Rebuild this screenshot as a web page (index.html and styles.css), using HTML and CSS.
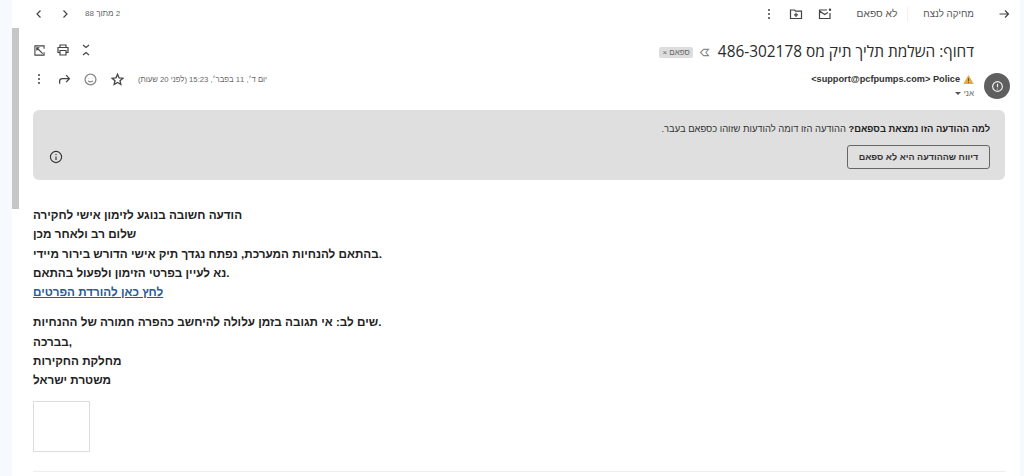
FILE: index.html
```html
<!DOCTYPE html>
<html lang="he">
<head>
<meta charset="utf-8">
<title>דחוף</title>
<link rel="stylesheet" href="styles.css">
</head>
<body>
<div class="thumb"></div>
<main class="panel">
  <header class="toolbar">
    <div class="tool-right">
      <svg class="ic ic-back" viewBox="0 0 12 12"><path d="M1.500 6H10.500M7 2.500 10.500 6 7 9.500"/></svg>
      <span class="tool-text del">מחיקה לנצח</span>
      <span class="tool-sep"></span>
      <span class="tool-text notspam">לא ספאם</span>
      <svg class="ic ic-mail" viewBox="0 0 14 12"><path d="M9 2H1.500V10.500H12V5M1.500 3 6.700 6.500 10 4.400"/><circle cx="12" cy="1.800" r="1.200" class="fill"/></svg>
      <svg class="ic ic-folder" viewBox="0 0 14 12"><path d="M1.500 2H5.500L6.700 3.200H12.500V10.500H1.500ZM7 4.800V9M5 6.900H9"/></svg>
      <svg class="ic ic-dots" viewBox="0 0 4 12"><circle cx="2" cy="2" r="1" class="fill"/><circle cx="2" cy="6" r="1" class="fill"/><circle cx="2" cy="10" r="1" class="fill"/></svg>
    </div>
    <div class="tool-left">
      <span class="pager">2 מתוך 88</span>
      <svg class="ic ic-chev" viewBox="0 0 8 10"><path d="M2.500 1.500 6 5 2.500 8.500"/></svg>
      <svg class="ic ic-chev" viewBox="0 0 8 10"><path d="M5.500 1.500 2 5 5.500 8.500"/></svg>
    </div>
  </header>

  <section class="subject-row">
    <div class="subject">
      <h1 class="title">דחוף: השלמת תליך תיק מס 486-302178</h1>
      <svg class="ic ic-label" viewBox="0 0 12 10"><path d="M10.500 1.500H5L1.500 5 5 8.500H10.500L7.500 5Z"/></svg>
      <span class="chip">ספאם ×</span>
    </div>
    <div class="subject-tools">
      <svg class="ic ic-expand" viewBox="0 0 8 12"><path d="M1 1 4 3.500 7 1M1 11 4 8.500 7 11"/></svg>
      <svg class="ic ic-print" viewBox="0 0 12 12"><path d="M3 3.500V1H9V3.500M3 8.500H1V3.500H11V8.500H9M3 6.500H9V11H3Z"/></svg>
      <svg class="ic ic-open" viewBox="0 0 12 12"><path d="M4 1H1V11H11V8M1 1H11V4M3 3 9.500 9.500M3 6V3H6"/></svg>
    </div>
  </section>

  <section class="meta-row">
    <div class="avatar">
      <svg class="ic-alert" viewBox="0 0 12 12"><circle cx="6" cy="6" r="4.500"/><path d="M6 3.500V6.800M6 8V8.800"/></svg>
    </div>
    <div class="sender">
      <div class="from" dir="ltr"><span>&lt;support@pcfpumps.com&gt; Police</span>
        <svg class="ic-warn" viewBox="0 0 12 11"><path d="M6 .5 11.700 10.500H.3Z"/><path class="warn-mark" d="M6 4V7.500M6 8.500V9.500"/></svg>
      </div>
      <div class="to">אני <span class="caret"></span></div>
    </div>
    <div class="meta-left">
      <span class="date">יום ד׳, 11 בפבר׳, 15:23 (לפני 20 שעות)</span>
      <svg class="ic ic-star" viewBox="0 0 12 12"><path d="M6 1.200 7.400 4.500 11 4.800 8.300 7.100 9.100 10.600 6 8.800 2.900 10.600 3.700 7.100 1 4.800 4.600 4.500Z"/></svg>
      <svg class="ic ic-smile" viewBox="0 0 12 12"><circle cx="6" cy="6" r="5"/><path d="M3.800 7.200C4.600 8.600 7.400 8.600 8.200 7.200M4.300 4.600V4.900M7.700 4.600V4.900"/></svg>
      <svg class="ic ic-fwd" viewBox="0 0 12 12"><path d="M1.500 10V7.500C1.500 6 2.500 5.200 4 5.200H10.500M7.500 2 10.500 5.200 7.500 8.400"/></svg>
      <svg class="ic ic-dots" viewBox="0 0 4 12"><circle cx="2" cy="2" r="1" class="fill"/><circle cx="2" cy="6" r="1" class="fill"/><circle cx="2" cy="10" r="1" class="fill"/></svg>
    </div>
  </section>

  <section class="notice">
    <p class="notice-text"><b>למה ההודעה הזו נמצאת בספאם?</b> ההודעה הזו דומה להודעות שזוהו כספאם בעבר.</p>
    <div class="notice-actions">
      <button class="report">דיווח שההודעה היא לא ספאם</button>
      <svg class="ic-info" viewBox="0 0 12 12"><circle cx="6" cy="6" r="4.800"/><path d="M6 5.500V8.500M6 3.500V4.300"/></svg>
    </div>
  </section>

  <article class="message" dir="ltr">
    <div class="para">
      <div>הודעה חשובה בנוגע לזימון אישי לחקירה</div>
      <div>שלום רב ולאחר מכן</div>
      <div>בהתאם להנחיות המערכת, נפתח נגדך תיק אישי הדורש בירור מיידי.</div>
      <div>נא לעיין בפרטי הזימון ולפעול בהתאם.</div>
      <div><a href="#" class="link">לחץ כאן להורדת הפרטים</a></div>
    </div>
    <div class="para">
      <div>שים לב: אי תגובה בזמן עלולה להיחשב כהפרה חמורה של ההנחיות.</div>
      <div>בברכה,</div>
      <div>מחלקת החקירות</div>
      <div>משטרת ישראל</div>
    </div>
    <div class="broken-img"></div>
  </article>
  <div class="rule"></div>
</main>
</body>
</html>
```
FILE: styles.css
```css
* { box-sizing: border-box; }
html, body { margin: 0; height: 476px; overflow: hidden; }
body {
  background: #f6f9fd;
  font-family: "Liberation Sans", Arial, sans-serif;
  color: #222;
  position: relative;
}
.panel {
  margin: 0 4px 0 12px;
  height: 476px;
  background: #fff;
  padding-left: 21px;
  padding-right: 15px;
  direction: rtl;
}
.thumb {
  position: absolute;
  left: 12px;
  top: 28px;
  width: 7px;
  height: 181px;
  background: #c6c6c6;
}
.ic { fill: none; stroke: #444; stroke-width: 1.2; flex: none; }
.ic .fill { fill: #444; stroke: none; }

.toolbar {
  height: 27px;
  display: flex;
  justify-content: space-between;
  align-items: center;
}
.tool-right, .tool-left { display: flex; align-items: center; }
.tool-text { font-size: 10.200px; color: #555; }
.del { font-size: 9.700px; }
.ic-back { width: 12px; height: 12px; margin-left: 24px; margin-right: -5px; }
.tool-sep { width: 1px; height: 14px; background: #f0f0f0; margin: 0 15px 0 10px; }
.ic-mail { width: 14px; height: 12px; margin-right: 25px; margin-left: 15px; }
.ic-folder { width: 14px; height: 12px; margin-left: 18px; }
.ic-dots { width: 4px; height: 12px; }
.tool-left { margin-left: 2px; }
.pager { font-size: 8px; color: #666; margin-left: 16px; }
.ic-chev { width: 8px; height: 10px; }
.ic-chev + .ic-chev { margin-right: 18px; }

.subject-row {
  height: 36px;
  padding-top: 6px;
  display: flex;
  justify-content: space-between;
  align-items: center;
}
.subject { display: flex; align-items: center; padding-right: 31px; padding-top: 6px; }
.title {
  margin: 0;
  font: 400 15.400px "Open Sans", "Liberation Sans", sans-serif;
  color: #2b2b2b;
  white-space: nowrap;
}
.ic-label { width: 11px; height: 9px; margin: 2px 8px 0 6px; stroke: #888; }
.chip {
  font-size: 8px;
  background: #ddd;
  color: #666;
  padding: 1px 3px;
  border-radius: 2px;
  margin-top: 2px;
}
.subject-tools { display: flex; align-items: center; gap: 12px; padding-left: 1px; padding-top: 4px; }
.ic-expand { width: 8px; height: 12px; margin-left: 1px; }
.ic-print { width: 12px; height: 12px; }
.ic-open { width: 11px; height: 11px; }

.meta-row {
  height: 47px;
  display: flex;
  align-items: flex-start;
}
.avatar {
  width: 26px; height: 26px;
  margin-right: -5px;
  margin-top: 10px;
  border-radius: 50%;
  background: #5f5f5f;
  display: flex; align-items: center; justify-content: center;
  flex: none;
}
.ic-alert { width: 13px; height: 13px; fill: none; stroke: #f0f0f0; stroke-width: 1.100; }
.sender { padding-right: 10px; padding-top: 10px; flex: none; }
.from {
  font-size: 9.200px;
  font-weight: 700;
  color: #333;
  display: flex;
  align-items: center;
  gap: 3px;
  height: 12px;
}
.ic-warn { width: 11px; height: 11px; fill: #e8a93a; flex: none; }
.warn-mark { stroke: #5a4a20; stroke-width: 1; fill: none; }
.to { font-size: 8px; color: #666; display: flex; align-items: center; gap: 3px; height: 12px; margin-top: 2px; }
.caret { border: 3px solid transparent; border-top-color: #555; border-bottom: 0; }
.meta-left { display: flex; align-items: center; margin-right: auto; height: 12px; margin-top: 10px; }
.date { font-size: 7.700px; color: #666; margin-left: 14px; white-space: nowrap; }
.ic-star { width: 13px; height: 13px; margin-left: 14px; }
.ic-smile { width: 13px; height: 13px; margin-left: 13px; stroke: #888; }
.ic-fwd { width: 13px; height: 13px; margin-left: 17px; }
.meta-left .ic-dots { margin-left: 4px; }

.notice {
  height: 70px;
  background: #dfdfdf;
  border-radius: 6px;
  padding: 12px 15px 11px 16px;
  display: flex;
  flex-direction: column;
  justify-content: space-between;
}
.notice-text { margin: 0; font-size: 9.400px; color: #333; line-height: 14px; }
.notice-text b { color: #222; }
.notice-actions { display: flex; justify-content: space-between; align-items: center; }
.report {
  height: 24px;
  width: 143px;
  padding: 0;
  background: transparent;
  border: 1px solid #666;
  border-radius: 3px;
  font: 700 9px "Liberation Sans", sans-serif;
  color: #333;
}
.ic-info { width: 14px; height: 14px; fill: none; stroke: #333; stroke-width: 1; }

.message {
  padding-top: 25px;
  font-size: 11.700px;
  font-weight: 700;
  line-height: 19.300px;
  color: #222;
  text-align: left;
}
.para { margin-bottom: 11px; }
.link { color: #2b5b94; }
.broken-img { width: 57px; height: 51px; border: 1px solid #ddd; margin-top: 6px; }
.rule { height: 1px; background: #eee; margin-top: 19px; }
```
